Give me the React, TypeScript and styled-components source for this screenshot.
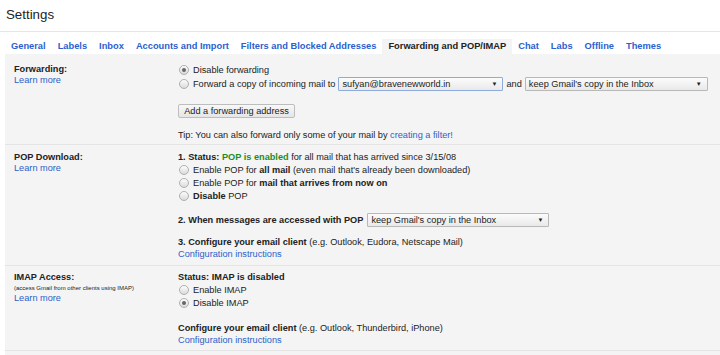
import React from "react";
import styled, { createGlobalStyle } from "styled-components";

const GlobalStyle = createGlobalStyle`
  body {
    margin: 0;
    background: #fff;
    font-family: "Liberation Sans", Arial, sans-serif;
    color: #222;
  }
`;

const Header = styled.div`
  height: 31px;
  border-bottom: 1px solid #e5e5e5;
  padding-left: 6px;
  font-size: 13.3px;
  line-height: 30px;
  color: #222;
`;

const TabBar = styled.div`
  display: flex;
  margin: 7px 0 0 5px;
  height: 15px;
`;

const Tab = styled.div<{ $active?: boolean }>`
  padding: 0 6px;
  line-height: 15px;
  font-size: 9.3px;
  font-weight: bold;
  color: ${(p) => (p.$active ? "#222" : "#2c5fcf")};
  background: ${(p) => (p.$active ? "#f4f4f4" : "transparent")};
  white-space: nowrap;
`;

const Panel = styled.div`
  margin-left: 5px;
  padding-bottom: 10px;
  background: #f4f4f4;
  font-size: 9.2px;
`;

const Section = styled.div<{ $top: number; $bottom: number }>`
  display: grid;
  grid-template-columns: 164px 1fr;
  padding: ${(p) => p.$top}px 0 ${(p) => p.$bottom}px 9px;
  border-bottom: 1px solid #e4e4e4;
`;

const LabelCol = styled.div`
  line-height: 11px;
`;

const Title = styled.div`
  font-weight: bold;
  line-height: 12px;
`;

const Small = styled.div`
  font-size: 6px;
  line-height: 10px;
`;

const Link = styled.a`
  color: #2b62c9;
  text-decoration: none;
  cursor: pointer;
`;

const Content = styled.div`
  display: flex;
  flex-direction: column;
  align-items: flex-start;
`;

const Line = styled.div<{ $gap?: number }>`
  line-height: 12px;
  margin-top: ${(p) => p.$gap ?? 0}px;
  white-space: nowrap;
`;

const RadioRow = styled.label<{ $h?: number }>`
  display: flex;
  align-items: center;
  height: ${(p) => p.$h ?? 13}px;
  white-space: nowrap;
`;

const RadioDot = styled.span<{ $on?: boolean }>`
  position: relative;
  width: 10px;
  height: 10px;
  box-sizing: border-box;
  border-radius: 50%;
  border: 1px solid #b0b0b0;
  background: linear-gradient(#fdfdfd, #dadada);
  margin: 0 4px 0 1px;
  flex-shrink: 0;

  &::after {
    content: "";
    display: ${(p) => (p.$on ? "block" : "none")};
    position: absolute;
    inset: 2px;
    border-radius: 50%;
    background: #666;
  }
`;

const Select = styled.div<{ $w: number; $focus?: boolean }>`
  width: ${(p) => p.$w}px;
  height: 14px;
  box-sizing: border-box;
  border: 1px solid ${(p) => (p.$focus ? "#8fabdd" : "#b8b8b8")};
  border-radius: 1px;
  background: linear-gradient(#fbfbfb, #e9e9e9);
  display: flex;
  align-items: center;
  justify-content: space-between;
  padding: 0 5px 0 3px;
  color: #222;
`;

const Arrow = styled.span`
  font-size: 6px;
  color: #222;
`;

const Joiner = styled.span<{ $l?: number; $r?: number }>`
  margin: 0 ${(p) => p.$r ?? 0}px 0 ${(p) => p.$l ?? 0}px;
`;

const Button = styled.button`
  margin-top: 13px;
  height: 14px;
  width: 117px;
  padding: 0;
  border: 1px solid #bdbdbd;
  border-radius: 2px;
  background: linear-gradient(#f8f8f8, #e6e6e6);
  font-family: inherit;
  font-size: 9.2px;
  color: #222;
`;

const SelectRow = styled.div<{ $gap: number }>`
  display: flex;
  align-items: center;
  height: 14px;
  margin-top: ${(p) => p.$gap}px;
  white-space: nowrap;
`;

const Green = styled.b`
  color: #1e8e1e;
`;

function Radio({ on, children }: { on?: boolean; children: React.ReactNode }) {
  return (
    <RadioRow>
      <RadioDot $on={on} />
      <span>{children}</span>
    </RadioRow>
  );
}

const tabs = [
  "General",
  "Labels",
  "Inbox",
  "Accounts and Import",
  "Filters and Blocked Addresses",
  "Forwarding and POP/IMAP",
  "Chat",
  "Labs",
  "Offline",
  "Themes",
];

export default function App() {
  return (
    <>
      <GlobalStyle />
      <Header>Settings</Header>
      <TabBar>
        {tabs.map((t) => (
          <Tab key={t} $active={t === "Forwarding and POP/IMAP"}>
            {t}
          </Tab>
        ))}
      </TabBar>
      <Panel>
        <Section $top={9} $bottom={3}>
          <LabelCol>
            <Title>Forwarding:</Title>
            <Link>Learn more</Link>
          </LabelCol>
          <Content>
            <Radio on>Disable forwarding</Radio>
            <RadioRow $h={15}>
              <RadioDot />
              <span>Forward a copy of incoming mail to</span>
              <Joiner $l={3}>
                <Select $w={165} $focus>
                  <span>sufyan@bravenewworld.in</span>
                  <Arrow>▼</Arrow>
                </Select>
              </Joiner>
              <Joiner $l={3} $r={3}>and</Joiner>
              <Select $w={183}>
                <span>keep Gmail's copy in the Inbox</span>
                <Arrow>▼</Arrow>
              </Select>
            </RadioRow>
            <Button>Add a forwarding address</Button>
            <Line $gap={11}>
              Tip: You can also forward only some of your mail by <Link>creating a filter!</Link>
            </Line>
          </Content>
        </Section>

        <Section $top={6} $bottom={5}>
          <LabelCol>
            <Title>POP Download:</Title>
            <Link>Learn more</Link>
          </LabelCol>
          <Content>
            <Line>
              <b>1. Status: </b>
              <Green>POP is enabled</Green> for all mail that has arrived since 3/15/08
            </Line>
            <Radio>
              Enable POP for <b>all mail</b> (even mail that's already been downloaded)
            </Radio>
            <Radio>
              Enable POP for <b>mail that arrives from now on</b>
            </Radio>
            <Radio>
              <b>Disable</b> POP
            </Radio>
            <SelectRow $gap={11}>
              <b>2. When messages are accessed with POP</b>
              <Joiner $l={4}>
                <Select $w={182}>
                  <span>keep Gmail's copy in the Inbox</span>
                  <Arrow>▼</Arrow>
                </Select>
              </Joiner>
            </SelectRow>
            <Line $gap={9}>
              <b>3. Configure your email client</b> (e.g. Outlook, Eudora, Netscape Mail)
            </Line>
            <Line>
              <Link>Configuration instructions</Link>
            </Line>
          </Content>
        </Section>

        <Section $top={5} $bottom={4}>
          <LabelCol>
            <Title>IMAP Access:</Title>
            <Small>(access Gmail from other clients using IMAP)</Small>
            <Link>Learn more</Link>
          </LabelCol>
          <Content>
            <Line>
              <b>Status: IMAP is disabled</b>
            </Line>
            <Radio>Enable IMAP</Radio>
            <Radio on>Disable IMAP</Radio>
            <Line $gap={13}>
              <b>Configure your email client</b> (e.g. Outlook, Thunderbird, iPhone)
            </Line>
            <Line>
              <Link>Configuration instructions</Link>
            </Line>
          </Content>
        </Section>
      </Panel>
    </>
  );
}
